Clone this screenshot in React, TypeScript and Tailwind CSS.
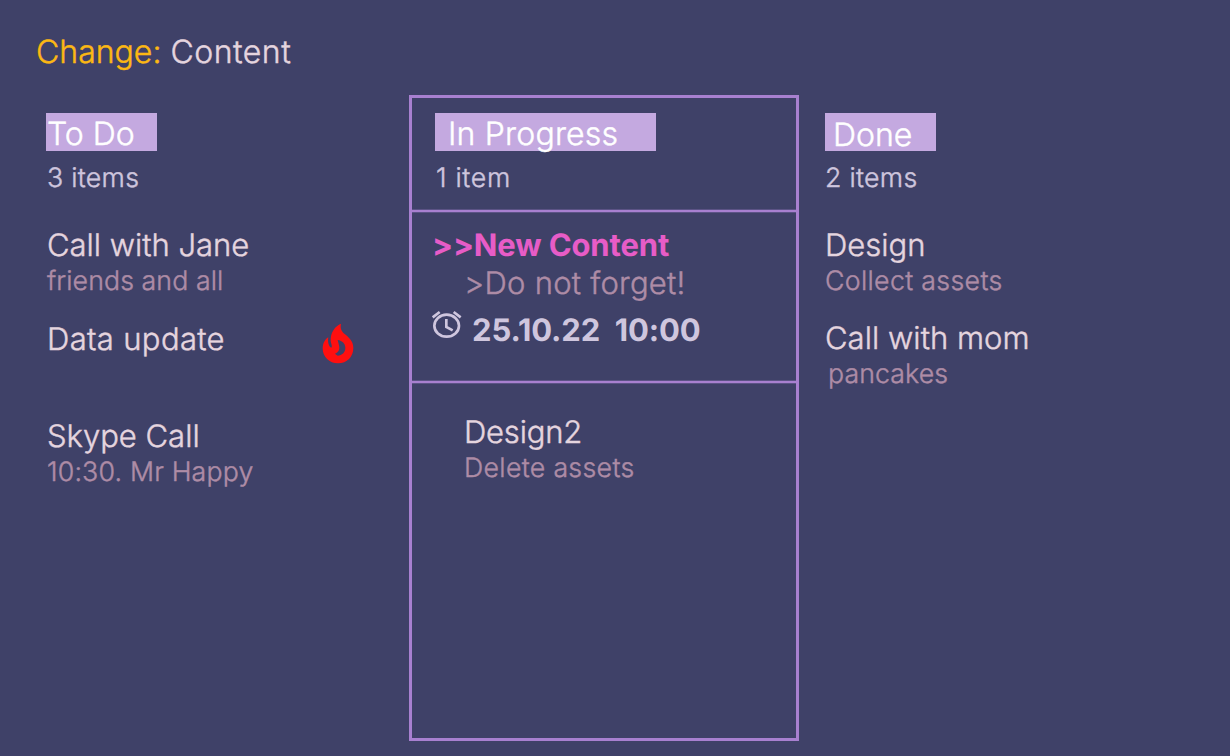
import type { ReactNode } from "react";

function Title({ children, className = "" }: { children: ReactNode; className?: string }) {
  return <h3 className={`text-[31px] leading-[36px] text-[#e5d5df] ${className}`}>{children}</h3>;
}

function Note({ children, className = "" }: { children: ReactNode; className?: string }) {
  return <p className={`text-[26.7px] leading-[34px] text-[#ae8ca6] ${className}`}>{children}</p>;
}

function Count({ children, className = "" }: { children: ReactNode; className?: string }) {
  return <p className={`mt-[10px] text-[26.7px] leading-[34px] text-[#cfc6de] ${className}`}>{children}</p>;
}

function Heading({ children, className = "" }: { children: ReactNode; className?: string }) {
  return <h2 className={`h-[38px] bg-[#c4a9e0] text-[32px] leading-[41px] text-white ${className}`}>{children}</h2>;
}

function Flame() {
  return (
    <svg viewBox="0 0 180 180" className="size-[60px]" fill="#ff0f0f" fillRule="evenodd">
      <path d="M93 29C76 36 61 54 62 80C63 90 68 96 64 101C57 99 52 85 55 70C45 76 38 88 38 103C38 129 58 148 84 148C111 148 130 128 130 102C130 82 118 72 105 61C94 51 90 43 93 29ZM83 78C97 80 106 89 106 101C106 115 96 124 83 125L75 119C85 115 89 108 88 99C87 92 85 87 83 78Z" />
    </svg>
  );
}

function Alarm() {
  return (
    <svg viewBox="0 0 180 150" className="h-[50px] w-[60px]" fill="none" stroke="#cfc6de" strokeWidth="8">
      <ellipse cx="80" cy="77" rx="37" ry="33" />
      <path d="M79 57V81L98 91M38 52L59 36M101 36L122 52" />
    </svg>
  );
}

export default function App() {
  return (
    <main className="h-[756px] w-[1230px] overflow-hidden bg-[#3f4168] font-['Inter',sans-serif] font-light whitespace-pre [-webkit-text-stroke-width:0.45px] [text-rendering:geometricPrecision]">
      <h1 className="h-[95px] pt-[32px] pl-[36px] text-[32px] leading-[40px] text-[#e5d5df]">
        <span className="text-[#fcb813]">Change:</span> <span className="tracking-[0.5px]">Content</span>
      </h1>
      <div className="flex">
        <section className="w-[409px] pt-[18px] pl-[46px]">
          <Heading className="w-[111px] pl-px">To Do</Heading>
          <Count className="pl-px tracking-[0.3px]">3 items</Count>
          <Title className="mt-[33px] pl-px">Call with Jane</Title>
          <Note className="pl-px tracking-[0.1px]">friends and all</Note>
          <div className="mt-[16px] flex h-[60px]">
            <Title className="mt-[8px] w-[264px] pl-px tracking-[0.35px]">Data update</Title>
            <Flame />
          </div>
          <Title className="mt-[45px] pl-px">Skype Call</Title>
          <Note className="pl-px tracking-[0.2px]">10:30. Mr Happy</Note>
        </section>
        <section className="h-[646px] w-[390px] border-3 border-[#a880d0]">
          <header className="h-[114px] border-b-2 border-[#a880d0] pt-[15px] pl-[23px] shadow-[0_1px_0_#5c5386,inset_0_-1px_0_#5c5386]">
            <Heading className="w-[221px] pl-[13px] tracking-[0.2px]">In Progress</Heading>
            <Count className="pl-px tracking-[0.7px]">1 item</Count>
          </header>
          <article className="h-[171px] border-b-2 border-[#a880d0] pt-[16px] [-webkit-text-stroke-width:0] shadow-[0_1px_0_#5c5386,inset_0_-1px_0_#5c5386]">
            <h3 className="pl-[20px] text-[31px] leading-[36px] font-bold tracking-[-0.13px] text-[#e75cc7]">&gt;&gt;New Content</h3>
            <p className="mt-[2px] pl-[52px] text-[31px] leading-[36px] tracking-[0.25px] text-[#ae8ca6] [-webkit-text-stroke-width:0.45px]">&gt;Do not forget!</p>
            <div className="-mt-[2px] flex h-[50px] pl-[8px]">
              <Alarm />
              <time className="mt-[13px] -ml-[8px] text-[31px] leading-[36px] font-bold tracking-[-0.1px] text-[#cfc6de]">25.10.22  10:00</time>
            </div>
          </article>
          <article className="pt-[32px] pl-[52px]">
            <Title className="tracking-[-0.2px]">Design2</Title>
            <Note className="tracking-[0.33px]">Delete assets</Note>
          </article>
        </section>
        <section className="pt-[18px] pl-[26px]">
          <Heading className="w-[111px] pt-px pl-[8px]">Done</Heading>
          <Count className="tracking-[0.3px]">2 items</Count>
          <Title className="mt-[33px]">Design</Title>
          <Note className="tracking-[0.35px]">Collect assets</Note>
          <Title className="mt-[23px] tracking-[0.05px]">Call with mom</Title>
          <Note className="pl-[3px] tracking-[0.1px]">pancakes</Note>
        </section>
      </div>
    </main>
  );
}
